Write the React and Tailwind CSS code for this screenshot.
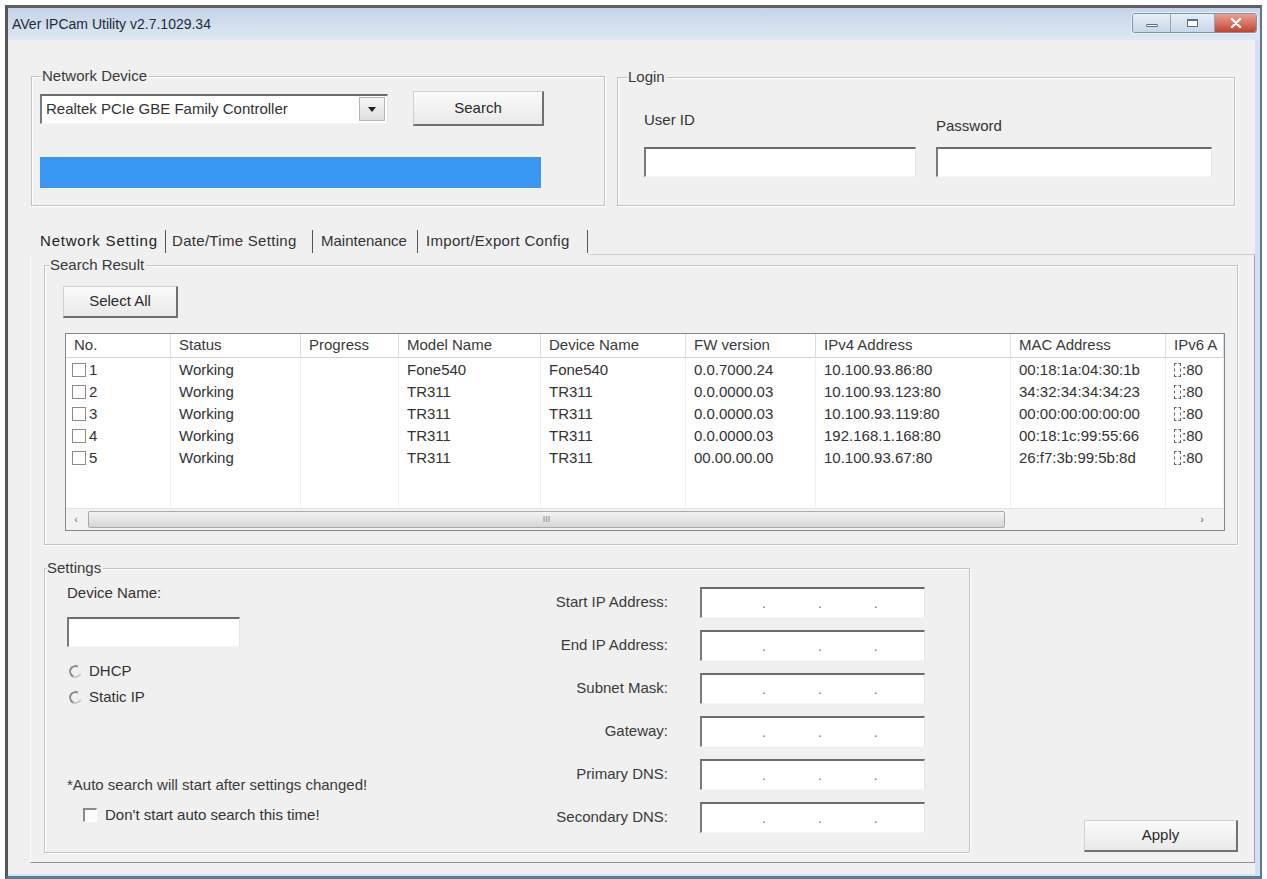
import React from 'react';

const rows = [
  { no: 1, status: 'Working', model: 'Fone540', device: 'Fone540', fw: '0.0.7000.24', ip: '10.100.93.86:80', mac: '00:18:1a:04:30:1b' },
  { no: 2, status: 'Working', model: 'TR311', device: 'TR311', fw: '0.0.0000.03', ip: '10.100.93.123:80', mac: '34:32:34:34:34:23' },
  { no: 3, status: 'Working', model: 'TR311', device: 'TR311', fw: '0.0.0000.03', ip: '10.100.93.119:80', mac: '00:00:00:00:00:00' },
  { no: 4, status: 'Working', model: 'TR311', device: 'TR311', fw: '0.0.0000.03', ip: '192.168.1.168:80', mac: '00:18:1c:99:55:66' },
  { no: 5, status: 'Working', model: 'TR311', device: 'TR311', fw: '00.00.00.00', ip: '10.100.93.67:80', mac: '26:f7:3b:99:5b:8d' },
];

// column widths written out so tailwind picks them up
const cols = [
  { key: 'no', label: 'No.', w: 'w-[105px]' },
  { key: 'status', label: 'Status', w: 'w-[130px]' },
  { key: 'progress', label: 'Progress', w: 'w-[98px]' },
  { key: 'model', label: 'Model Name', w: 'w-[142px]' },
  { key: 'device', label: 'Device Name', w: 'w-[145px]' },
  { key: 'fw', label: 'FW version', w: 'w-[130px]' },
  { key: 'ip', label: 'IPv4 Address', w: 'w-[195px]' },
  { key: 'mac', label: 'MAC Address', w: 'w-[155px]' },
  { key: 'ipv6', label: 'IPv6 A', w: 'w-[58px]' },
];

const ipFields = ['Start IP Address:', 'End IP Address:', 'Subnet Mask:', 'Gateway:', 'Primary DNS:', 'Secondary DNS:'];

function GroupBox({ label, labelLeft, className, children }) {
  return (
    <div className={`relative border border-[#c3c3c3] shadow-[inset_1px_1px_0_#ffffff,1px_1px_0_#ffffff] ${className}`}>
      <span className={`absolute -top-[10px] ${labelLeft} bg-[#f0f0f0] pr-[2px] text-[15px] leading-[18px] text-[#3a3a3a]`}>
        {label}
      </span>
      {children}
    </div>
  );
}

function Button({ className, children }) {
  return (
    <div
      className={`flex items-center justify-center border-t border-l border-[#d0d0d0] border-r-2 border-b-2 border-r-[#707070] border-b-[#707070] bg-gradient-to-b from-[#fbfbfb] to-[#e9e9e9] text-[15px] text-[#2a2a2a] ${className}`}
    >
      {children}
    </div>
  );
}

function TextBox({ className, children }) {
  return (
    <div className={`border-t-2 border-l-2 border-t-[#6c6c6c] border-l-[#7a7a7a] border-r border-b border-r-[#e4e4e4] border-b-[#f6f6f6] bg-white ${className}`}>
      {children}
    </div>
  );
}

function Radio({ label }) {
  return (
    <div className="flex h-[18px] items-center">
      <span className="ml-[2px] h-[13px] w-[13px] rotate-[-20deg] rounded-full border-2 border-t-[#8a8a8a] border-l-[#8a8a8a] border-r-transparent border-b-[#c8c8c8]" />
      <span className="ml-[7px] text-[15px] text-[#333]">{label}</span>
    </div>
  );
}

function WindowControls() {
  return (
    <div className="mt-[5px] mr-[3px] flex h-[20px] self-start overflow-hidden rounded-[3px] border border-[#8095ac] shadow-[0_0_0_1px_#e6eef7]">
      <div className="flex w-[38px] items-center justify-center border-r border-[#8fa3b9] bg-gradient-to-b from-[#e7eef6] to-[#c7d6e6]">
        <span className="mt-[4px] h-[3px] w-[12px] rounded-[1px] border border-[#5a6e84] bg-white" />
      </div>
      <div className="flex w-[44px] items-center justify-center border-r border-[#8fa3b9] bg-gradient-to-b from-[#e7eef6] to-[#c7d6e6]">
        <span className="h-[8px] w-[11px] border border-[#5a6e84] border-t-2 bg-white" />
      </div>
      <div className="flex w-[41px] items-center justify-center bg-gradient-to-b from-[#e9a193] to-[#c4412f]">
        <svg width="12" height="10" viewBox="0 0 12 10">
          <path d="M2 1 L10 9 M10 1 L2 9" stroke="#ffffff" strokeWidth="2.4" strokeLinecap="round" />
        </svg>
      </div>
    </div>
  );
}

function DeviceTable() {
  return (
    <div className="ml-[20px] mt-[15px] flex h-[198px] w-[1160px] flex-col overflow-hidden border border-[#828790] bg-white">
      {/* header */}
      <div className="flex h-[24px] w-max border-b border-[#d5d5d5]">
        {cols.map((c) => (
          <div key={c.key} className={`${c.w} flex shrink-0 items-center whitespace-nowrap border-r border-[#dcdcdc] pl-[8px] text-[15px] text-[#3a3a3a]`}>
            {c.label}
          </div>
        ))}
      </div>
      {/* body */}
      <div className="relative h-[150px] overflow-hidden">
        <div className="flex h-full w-max pt-[1px]">
          {cols.map((c) => (
            <div key={c.key} className={`${c.w} shrink-0 border-r border-[#f0f0f0]`}>
              {rows.map((r) => (
                <div key={r.no} className="flex h-[22px] items-center whitespace-nowrap pl-[8px] text-[15px] text-[#333]">
                  {c.key === 'no' && (
                    <>
                      <span className="-ml-[2px] h-[14px] w-[14px] border border-[#8a8a8a] bg-white" />
                      <span className="ml-[3px]">{r.no}</span>
                    </>
                  )}
                  {c.key === 'ipv6' && (
                    <>
                      <span className="h-[14px] w-[7px] border border-dashed border-[#666]" />
                      <span className="ml-[1px]">:80</span>
                    </>
                  )}
                  {c.key !== 'no' && c.key !== 'ipv6' && c.key !== 'progress' && r[c.key]}
                </div>
              ))}
            </div>
          ))}
        </div>
      </div>
      {/* horizontal scrollbar */}
      <div className="flex h-[22px] items-center border-t border-[#e3e3e3] bg-[#f2f2f2]">
        <div className="flex w-[20px] items-center justify-center text-[11px] text-[#777]">‹</div>
        <div className="ml-[2px] flex h-[17px] w-[917px] items-center justify-center rounded-[2px] border border-[#a9a9a9] bg-gradient-to-b from-[#f3f3f3] to-[#d6d6d6] text-[9px] text-[#888]">
          III
        </div>
        <div className="flex-1" />
        <div className="mr-[12px] flex w-[20px] items-center justify-center text-[11px] text-[#555]">›</div>
      </div>
    </div>
  );
}

export default function App() {
  return (
    <div className="h-[879px] w-[1267px] bg-white pl-[5px] pt-[5px] font-['Liberation_Sans',Arial,sans-serif]">
      <div className="flex h-[874px] w-[1257px] flex-col border-t-[3px] border-l-[3px] border-r-2 border-b-[3px] border-t-[#5f5f5f] border-l-[#565656] border-r-[#5f7892] border-b-[#5b7d94]">
        {/* title bar */}
        <div className="flex h-[32px] shrink-0 items-center bg-gradient-to-b from-[#c4d4e7] to-[#dfe8f3]">
          <span className="ml-[4px] text-[14px] text-[#1e2a38]">AVer IPCam Utility v2.7.1029.34</span>
          <div className="flex-1" />
          <WindowControls />
        </div>

        {/* client area */}
        <div className="flex flex-1 flex-col border-r-[5px] border-b-2 border-r-[#d3e0ed] border-b-[#d6e6ef] bg-[#f0f0f0]">
          {/* top row */}
          <div className="flex items-start gap-[12px] pl-[23px] pt-[36px]">
            <GroupBox label="Network Device" labelLeft="left-[10px]" className="h-[130px] w-[574px]">
              <div className="mt-[14px] flex h-[35px] items-center pl-[8px]">
                <TextBox className="flex h-[30px] w-[348px] items-center">
                  <span className="flex-1 pl-[4px] text-[15px] text-[#333]">Realtek PCIe GBE Family Controller</span>
                  <div className="mr-[2px] flex h-[24px] w-[26px] items-center justify-center border border-[#b5b5b5] bg-gradient-to-b from-[#f7f7f7] to-[#dedede]">
                    <svg width="8" height="5" viewBox="0 0 8 5">
                      <path d="M0 0 L8 0 L4 5 Z" fill="#222" />
                    </svg>
                  </div>
                </TextBox>
                <Button className="ml-[25px] h-[35px] w-[131px]">Search</Button>
              </div>
              <div className="ml-[8px] mt-[31px] h-[31px] w-[501px] bg-[#3797f2]" />
            </GroupBox>

            <GroupBox label="Login" labelLeft="left-[10px]" className="mt-[1px] h-[129px] w-[618px]">
              <div className="flex gap-[20px] pl-[26px] pt-[33px]">
                <div className="flex flex-col">
                  <span className="h-[18px] text-[15px] leading-[18px] text-[#333]">User ID</span>
                  <TextBox className="mt-[18px] h-[30px] w-[272px]" />
                </div>
                <div className="flex flex-col">
                  <span className="mt-[6px] h-[18px] text-[15px] leading-[18px] text-[#333]">Password</span>
                  <TextBox className="mt-[12px] h-[30px] w-[276px]" />
                </div>
              </div>
            </GroupBox>
          </div>

          {/* tab control */}
          <div className="ml-[22px] mt-[22px] flex w-[1225px] flex-col">
            <div className="flex h-[27px] pl-[4px]">
              <div className="mt-[2px] flex h-[23px] w-[132px] items-center border-r border-[#555] pl-[6px] text-[15px] tracking-[0.8px] text-[#222]">Network Setting</div>
              <div className="mt-[2px] flex h-[23px] w-[147px] items-center border-r border-[#555] pl-[6px] text-[15px] tracking-[0.3px] text-[#333]">Date/Time Setting</div>
              <div className="mt-[2px] flex h-[23px] w-[105px] items-center border-r border-[#555] pl-[8px] text-[15px] text-[#333]">Maintenance</div>
              <div className="mt-[2px] flex h-[23px] w-[170px] items-center border-r border-[#555] pl-[8px] text-[15px] tracking-[0.3px] text-[#333]">Import/Export Config</div>
              <div className="flex-1 border-b border-[#cfcfcf]" />
            </div>

            <div className="flex h-[608px] flex-col border-r border-b border-l border-r-[#a3a3a3] border-b-[#8f8f8f] border-l-[#fafafa]">
              <GroupBox label="Search Result" labelLeft="left-[5px]" className="ml-[13px] mt-[10px] h-[280px] w-[1194px]">
                <div className="pl-[18px] pt-[20px]">
                  <Button className="h-[32px] w-[115px]">Select All</Button>
                </div>
                <DeviceTable />
              </GroupBox>

              <div className="mt-[23px] flex items-end">
                <GroupBox label="Settings" labelLeft="left-[2px]" className="ml-[13px] h-[285px] w-[926px]">
                  <div className="flex pl-[22px]">
                    {/* left column */}
                    <div className="flex w-[433px] flex-col">
                      <span className="mt-[15px] h-[18px] text-[15px] leading-[18px] text-[#3a2f35]">Device Name:</span>
                      <TextBox className="mt-[15px] h-[30px] w-[173px]" />
                      <div className="mt-[15px]">
                        <Radio label="DHCP" />
                      </div>
                      <div className="mt-[8px]">
                        <Radio label="Static IP" />
                      </div>
                      <span className="mt-[70px] h-[18px] text-[15px] leading-[18px] text-[#3a3a3a]">*Auto search will start after settings changed!</span>
                      <div className="ml-[16px] mt-[12px] flex h-[18px] items-center">
                        <span className="h-[14px] w-[14px] border-t-2 border-l-2 border-t-[#8a8a8a] border-l-[#8a8a8a] border-r border-b border-r-white border-b-white bg-[#fbfbfb]" />
                        <span className="ml-[8px] text-[15px] text-[#333]">Don't start auto search this time!</span>
                      </div>
                    </div>
                    {/* right column */}
                    <div className="mt-[18px] flex flex-col gap-[12px]">
                      {ipFields.map((f) => (
                        <div key={f} className="flex items-center gap-[32px]">
                          <span className="w-[168px] text-right text-[15px] text-[#3a3a3a]">{f}</span>
                          <TextBox className="flex h-[31px] w-[225px] items-center gap-[52px] pl-[60px] text-[14px] text-[#777]">
                            <span>.</span>
                            <span>.</span>
                            <span>.</span>
                          </TextBox>
                        </div>
                      ))}
                    </div>
                  </div>
                </GroupBox>
                <Button className="mb-[1px] ml-[114px] h-[32px] w-[154px]">Apply</Button>
              </div>
            </div>
          </div>
        </div>
      </div>
    </div>
  );
}
